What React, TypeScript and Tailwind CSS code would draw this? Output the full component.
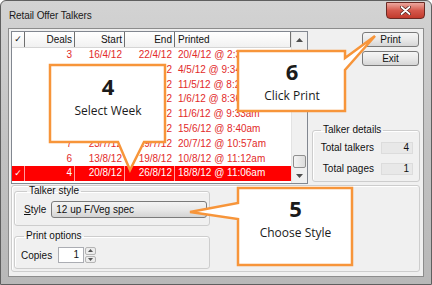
import React from "react";

type Row = {
  deals: string;
  start: string;
  end: string;
  printed: string;
  selected?: boolean;
};

const ROWS: Row[] = [
  { deals: "3", start: "16/4/12", end: "22/4/12", printed: "20/4/12 @ 2:35pm" },
  { deals: "5", start: "7/5/12", end: "13/5/12", printed: "4/5/12 @ 9:34am" },
  { deals: "4", start: "14/5/12", end: "20/5/12", printed: "11/5/12 @ 8:27am" },
  { deals: "6", start: "4/6/12", end: "10/6/12", printed: "1/6/12 @ 8:36am" },
  { deals: "5", start: "11/6/12", end: "17/6/12", printed: "11/6/12 @ 9:33am" },
  { deals: "5", start: "18/6/12", end: "24/6/12", printed: "15/6/12 @ 8:40am" },
  { deals: "7", start: "23/7/12", end: "29/7/12", printed: "20/7/12 @ 10:57am" },
  { deals: "6", start: "13/8/12", end: "19/8/12", printed: "10/8/12 @ 11:12am" },
  { deals: "4", start: "20/8/12", end: "26/8/12", printed: "18/8/12 @ 11:06am", selected: true },
];

function Arrow({ down }: { down?: boolean }) {
  return (
    <svg width="7" height="4" viewBox="0 0 7 4">
      <polygon points={down ? "0,0 7,0 3.5,4" : "0,4 7,4 3.5,0"} fill="#4d4d4d" />
    </svg>
  );
}

function WinButton({ label }: { label: string }) {
  return (
    <button
      type="button"
      className="flex h-[15px] w-[57px] items-center justify-center rounded-[3px] border border-[#7a7a7a] bg-gradient-to-b from-[#f6f6f6] via-[#e9e9e9] to-[#d6d6d6] text-[10px] leading-none text-[#111]"
    >
      {label}
    </button>
  );
}

function Callout({
  num,
  label,
  left,
  top,
  width,
}: {
  num: string;
  label: string;
  left: number;
  top: number;
  width: number;
}) {
  return (
    <div
      className="absolute flex flex-col items-center font-['Open_Sans',sans-serif] text-[#1b1b1b]"
      style={{ left, top, width }}
    >
      <span className="text-[22px] font-bold leading-[26px]">{num}</span>
      <span className="mt-[4px] text-[12px] leading-[16px]">{label}</span>
    </div>
  );
}

export default function App() {
  const grid = "grid grid-cols-[13px_50px_50px_50px_116px]";

  return (
    <div className="relative h-[285px] w-[432px] overflow-hidden rounded-t-[6px] border border-[#5f5f5f] bg-gradient-to-b from-[#d3d3d3] via-[#c2c2c2] to-[#b8b8b8] font-['Liberation_Sans',sans-serif] text-[10px] text-[#111]">
      {/* title bar */}
      <div className="flex h-[27px] items-center pl-[8px] pt-[1px]">
        <span className="text-[10px] tracking-[-0.1px] text-[#1a1a1a]">Retail Offer Talkers</span>
      </div>
      <button
        type="button"
        aria-label="Close"
        className="absolute left-[385px] top-[1px] flex h-[17px] w-[39px] items-center justify-center rounded-b-[4px] border border-[#6b2a24] bg-gradient-to-b from-[#eba79f] via-[#d5584c] to-[#c23a2c]"
      >
        <svg width="11" height="9" viewBox="0 0 11 9">
          <path d="M1.5 1 L9.5 8 M9.5 1 L1.5 8" stroke="#4a1a14" strokeWidth="3.2" strokeLinecap="round" />
          <path d="M1.5 1 L9.5 8 M9.5 1 L1.5 8" stroke="#fff" strokeWidth="1.8" strokeLinecap="round" />
        </svg>
      </button>

      {/* client area */}
      <div className="mx-[7px] h-[249px] border border-[#8c8c8c] bg-[#f0f0f0]">
        <div className="flex h-[155px]">
          {/* list */}
          <div className="ml-[2px] mt-[2px] flex h-[153px] w-[297px] border border-[#828790] bg-white">
            <div className="w-[279px]">
              <div className={`${grid} h-[16px] border-b border-[#d5d5d5] bg-gradient-to-b from-white to-[#f1f1f1] leading-[15px]`}>
                <div className="border-r border-[#6f6f6f] text-center font-['DejaVu_Sans',sans-serif] text-[9px]">✓</div>
                <div className="border-r border-[#6f6f6f] pr-[2px] text-right">Deals</div>
                <div className="border-r border-[#6f6f6f] pr-[2px] text-right">Start</div>
                <div className="border-r border-[#6f6f6f] pr-[2px] text-right">End</div>
                <div className="border-r border-[#6f6f6f] pl-[3px]">Printed</div>
              </div>
              {ROWS.map((r, i) => {
                const sep = r.selected ? "border-r border-[#ff9c9c]" : "border-r border-white";
                return (
                  <div
                    key={i}
                    className={`${grid} h-[14.8px] leading-[14.8px] ${
                      r.selected ? "bg-[#ff0000] text-white" : "text-[#e22a2a]"
                    }`}
                  >
                    <div className={`${sep} text-center font-['DejaVu_Sans',sans-serif] text-[9px]`}>
                      {r.selected ? "✓" : ""}
                    </div>
                    <div className={`${sep} pr-[2px] text-right`}>{r.deals}</div>
                    <div className={`${sep} pr-[2px] text-right`}>{r.start}</div>
                    <div className={`${sep} pr-[2px] text-right`}>{r.end}</div>
                    <div className="truncate pl-[3px]">{r.printed}</div>
                  </div>
                );
              })}
            </div>
            {/* scrollbar */}
            <div className="flex w-[16px] flex-col border-l border-[#e3e3e3] bg-[#f0f0f0]">
              <div className="flex h-[16px] items-center justify-center">
                <Arrow />
              </div>
              <div className="flex-1" />
              <div className="mx-[1px] h-[13px] rounded-[2px] border border-[#8f8f8f] bg-gradient-to-r from-[#f4f4f4] to-[#dcdcdc]" />
              <div className="flex h-[15px] items-center justify-center">
                <Arrow down />
              </div>
            </div>
          </div>

          {/* right panel */}
          <div className="flex flex-1 flex-col">
            <div className="mr-[4px] mt-[3px] flex flex-col items-end gap-[4px]">
              <WinButton label="Print" />
              <WinButton label="Exit" />
            </div>
            <fieldset className="ml-[4px] mr-[3px] mt-[59px] rounded-[3px] border border-[#cdcdcd] px-[6px] pb-[5px] shadow-[inset_1px_1px_0_#fff]">
              <legend className="ml-[2px] px-[2px] leading-[10px]">Talker details</legend>
              <div className="mt-[5px] flex flex-col gap-[6px]">
                <div className="flex items-center justify-end gap-[7px]">
                  <span>Total talkers</span>
                  <span className="h-[12px] w-[32px] border border-[#dcdcdc] bg-[#e8e8e8] pr-[3px] text-right leading-[10px]">4</span>
                </div>
                <div className="flex items-center justify-end gap-[7px]">
                  <span>Total pages</span>
                  <span className="h-[12px] w-[32px] border border-[#dcdcdc] bg-[#e8e8e8] pr-[3px] text-right leading-[10px]">1</span>
                </div>
              </div>
            </fieldset>
          </div>
        </div>

        {/* lower options */}
        <div className="ml-[2px] mr-[3px] mt-[1px] rounded-[3px] border border-[#cdcdcd] px-[2px] pb-[2px] shadow-[inset_1px_1px_0_#fff]">
          <fieldset className="w-[196px] rounded-[3px] border border-[#cdcdcd] pb-[7px] pl-[9px] shadow-[inset_1px_1px_0_#fff]">
            <legend className="ml-[3px] px-[2px] leading-[10px]">Talker style</legend>
            <div className="mt-[5px] flex items-center gap-[5px]">
              <span>
                <span className="underline">S</span>tyle
              </span>
              <div className="flex h-[17px] w-[156px] items-center rounded-[3px] border border-[#7a7a7a] bg-gradient-to-b from-[#f4f4f4] via-[#e8e8e8] to-[#d4d4d4] pl-[4px]">
                12 up F/Veg spec
              </div>
            </div>
          </fieldset>
          <fieldset className="mt-[5px] w-[196px] rounded-[3px] border border-[#cdcdcd] pb-[5px] pl-[6px] shadow-[inset_1px_1px_0_#fff]">
            <legend className="ml-[3px] px-[2px] leading-[10px]">Print options</legend>
            <div className="mt-[6px] flex items-center">
              <span>Copies</span>
              <div className="ml-[6px] h-[16px] w-[26px] border border-[#abadb3] bg-white pr-[4px] text-right leading-[14px]">1</div>
              <div className="ml-[1px] flex h-[16px] w-[11px] flex-col gap-[1px]">
                <div className="flex flex-1 items-center justify-center rounded-[2px] border border-[#b5b5b5] bg-[#ececec]">
                  <svg width="5" height="3" viewBox="0 0 5 3"><polygon points="0,3 5,3 2.5,0" fill="#555" /></svg>
                </div>
                <div className="flex flex-1 items-center justify-center rounded-[2px] border border-[#b5b5b5] bg-[#ececec]">
                  <svg width="5" height="3" viewBox="0 0 5 3"><polygon points="0,0 5,0 2.5,3" fill="#555" /></svg>
                </div>
              </div>
            </div>
          </fieldset>
        </div>
      </div>

      {/* tutorial callouts */}
      <svg className="pointer-events-none absolute left-[-1px] top-[-1px]" width="432" height="285" viewBox="0 0 432 285">
        <g fill="#fff" stroke="#f7953a" strokeWidth="2.5" strokeLinejoin="miter">
          <path d="M50 65 H165 V142 H144 L130 170 L118 142 H50 Z" />
          <path d="M238 51 H345 V58 L375 36 L345 70 V111 H238 Z" />
          <path d="M238 188 H352 V265 H238 V219 L190 212 L238 203 Z" />
        </g>
      </svg>
      <Callout num="4" label="Select Week" left={49} top={72} width={116} />
      <Callout num="6" label="Click Print" left={237} top={57} width={108} />
      <Callout num="5" label="Choose Style" left={237} top={194} width={115} />
    </div>
  );
}
